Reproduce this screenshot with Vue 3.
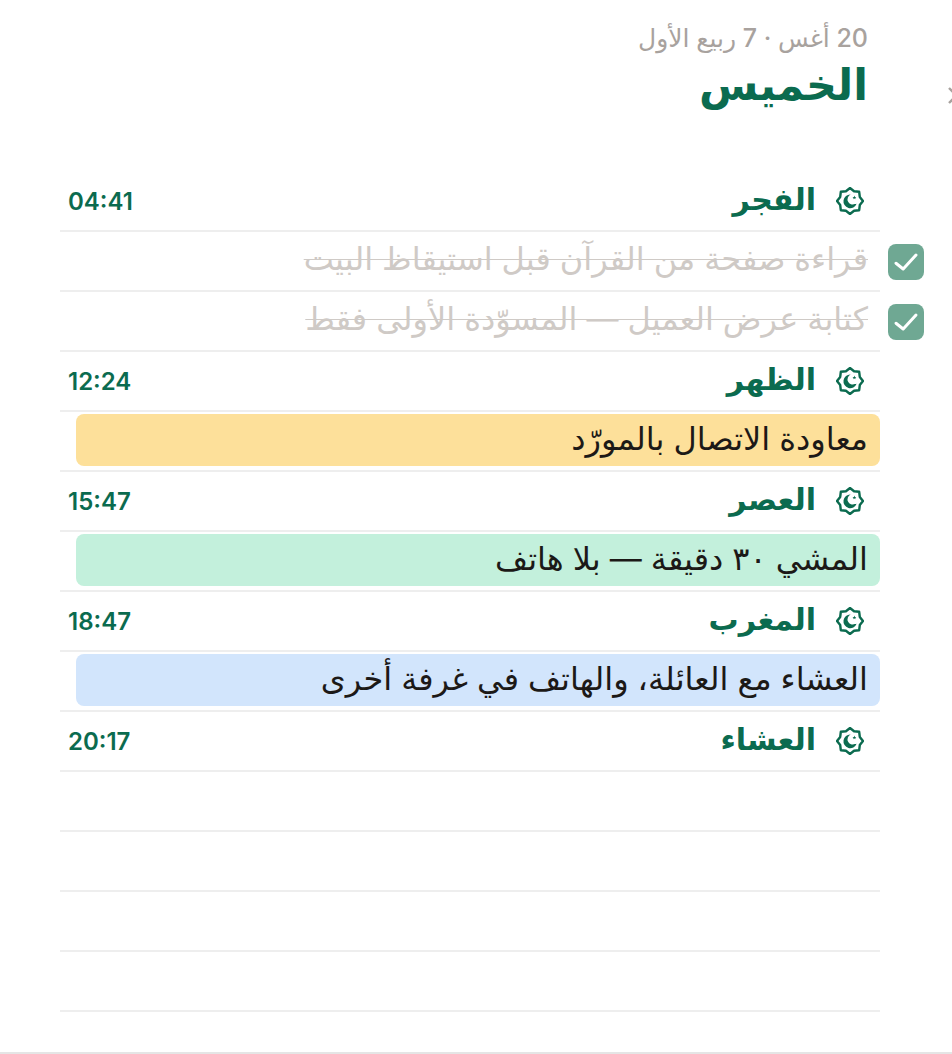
<script setup>
import { computed } from 'vue'
const rows = [
  { type: 'prayer', name: 'الفجر', time: '04:41' },
  { type: 'done', text: 'قراءة صفحة من القرآن قبل استيقاظ البيت' },
  { type: 'done', text: 'كتابة عرض العميل — المسوّدة الأولى فقط' },
  { type: 'prayer', name: 'الظهر', time: '12:24' },
  { type: 'event', text: 'معاودة الاتصال بالمورّد', tone: 'amber' },
  { type: 'prayer', name: 'العصر', time: '15:47' },
  { type: 'event', text: 'المشي ٣٠ دقيقة — بلا هاتف', tone: 'green' },
  { type: 'prayer', name: 'المغرب', time: '18:47' },
  { type: 'event', text: 'العشاء مع العائلة، والهاتف في غرفة أخرى', tone: 'blue' },
  { type: 'prayer', name: 'العشاء', time: '20:17' },
  { type: 'empty' }, { type: 'empty' }, { type: 'empty' }, { type: 'empty' }
]
const star = computed(() => {
  const pts = []
  for (let i = 0; i < 16; i++) {
    const r = i % 2 ? 10.6 : 13
    const a = (Math.PI * 2 * i) / 16 - Math.PI / 2
    pts.push((14 + r * Math.cos(a)).toFixed(2) + ',' + (14 + r * Math.sin(a)).toFixed(2))
  }
  return pts.join(' ')
})
</script>

<template>
  <div class="page" dir="rtl">
    <header class="head">
      <div class="date">20 أغس · 7 ربيع الأول</div>
      <h1 class="day">الخميس</h1>
      <svg class="edge" viewBox="0 0 24 24" width="24" height="24">
        <path d="M4 4l16 16M4 19L20 3" fill="none" stroke="#a8a29e" stroke-width="2.4" />
      </svg>
    </header>
    <div class="list">
      <div v-for="(r, i) in rows" :key="i" class="row">
        <template v-if="r.type === 'prayer'">
          <svg class="star" viewBox="0 0 28 28" width="28" height="28">
            <polygon :points="star" fill="none" stroke="#0b6b4f" stroke-width="2.4" stroke-linejoin="round" />
            <path d="M14.6 7.6a6.8 6.8 0 1 0 6 9.2 5.4 5.4 0 0 1-1.7.3 5.2 5.2 0 0 1-4.3-9.5z" fill="#0b6b4f" />
            <path d="M18.4 8.6l.5 1.3 1.4.1-1.1.9.4 1.4-1.2-.8-1.2.8.4-1.4-1.1-.9 1.4-.1z" fill="#0b6b4f" />
          </svg>
          <span class="pname">{{ r.name }}</span>
          <span class="time">{{ r.time }}</span>
        </template>
        <template v-else-if="r.type === 'done'">
          <span class="check">
            <svg viewBox="0 0 36 36" width="36" height="36"><path d="M8 19.3l7.2 5.7L28 11" fill="none" stroke="#fff" stroke-width="3" stroke-linecap="round" stroke-linejoin="round" /></svg>
          </span>
          <span class="donetext">{{ r.text }}</span>
        </template>
        <div v-else-if="r.type === 'event'" class="event" :class="r.tone">{{ r.text }}</div>
      </div>
    </div>
  </div>
</template>

<style>
html, body { margin: 0; background: #fff; }
</style>

<style scoped>
.page {
  width: 952px;
  height: 1054px;
  box-sizing: border-box;
  border-bottom: 2px solid #e5e5e5;
  position: relative;
  overflow: hidden;
  font-family: "Inter", "DejaVu Sans", sans-serif;
  background: #fff;
}
.head { padding: 21px 84px 0 0; height: 172px; box-sizing: border-box; }
.date { font-size: 25px; line-height: 34px; color: #a8a29e; font-weight: 500; }
.day { margin: -1px 0 0; font-size: 43px; line-height: 60px; font-weight: 700; color: #0b6b4f; }
.edge { position: absolute; left: 945px; top: 84px; }
.list { width: 820px; margin-inline-start: 72px; }
.row {
  height: 60px;
  box-sizing: border-box;
  border-bottom: 2px solid #eeeeee;
  display: flex;
  align-items: center;
  position: relative;
}
.star { margin-inline-start: 16px; flex: none; }
.pname { margin-inline-start: 20px; padding-bottom: 4px; font-size: 30px; font-weight: 700; color: #0b6b4f; }
.time { margin-inline-start: auto; margin-inline-end: 8px; font-size: 24px; font-weight: 600; color: #0b6b4f; }
.check {
  position: absolute;
  right: -44px;
  top: 12px;
  width: 36px; height: 36px;
  border-radius: 8px;
  background: #6fa893;
  display: flex;
}
.donetext { padding-inline-start: 12px; padding-bottom: 5px; font-size: 32px; color: #cfcac6; text-decoration: line-through; text-decoration-thickness: 1px; white-space: nowrap; }
.event {
  margin: 0 0 2px 16px;
  flex: 1;
  height: 52px;
  box-sizing: border-box;
  border-radius: 8px;
  padding: 0 12px 4px;
  display: flex; align-items: center;
  font-size: 32px;
  color: #1c1917;
  white-space: nowrap;
}
.amber { background: #fde09a; }
.green { background: #c3f0dc; }
.blue { background: #d2e5fc; }
</style>
